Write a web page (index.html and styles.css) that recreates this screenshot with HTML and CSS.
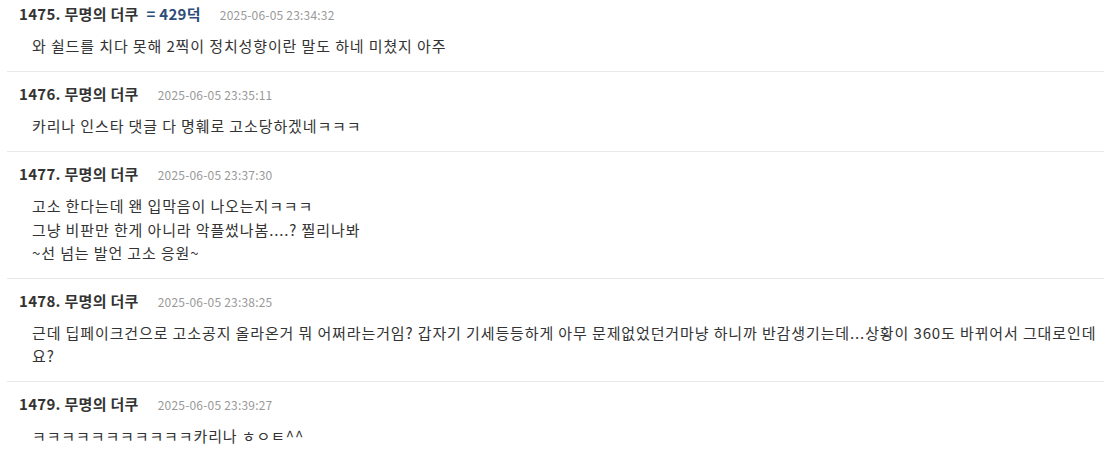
FILE: index.html
```html
<!DOCTYPE html>
<html>
<head>
	<meta charset="utf-8">
	<link rel="stylesheet" href="styles.css">
	<title>댓글</title>
</head>
<body>
	<div id="commentList">
		<div class="comment">
			<div class="commentHeader">
				<span class="commentName">1475. 무명의 더쿠 <span class="commentPoint">= 429덕</span></span>
				<span class="commentDate">2025-06-05 23:34:32</span>
			</div>
			<div class="commentBody">와 쉴드를 치다 못해 2찍이 정치성향이란 말도 하네 미쳤지 아주</div>
		</div>
		<div class="comment">
			<div class="commentHeader">
				<span class="commentName">1476. 무명의 더쿠</span>
				<span class="commentDate">2025-06-05 23:35:11</span>
			</div>
			<div class="commentBody">카리나 인스타 댓글 다 명훼로 고소당하겠네ㅋㅋㅋ</div>
		</div>
		<div class="comment">
			<div class="commentHeader">
				<span class="commentName">1477. 무명의 더쿠</span>
				<span class="commentDate">2025-06-05 23:37:30</span>
			</div>
			<div class="commentBody">고소 한다는데 왠 입막음이 나오는지ㅋㅋㅋ<br>그냥 비판만 한게 아니라 악플썼나봄....? 찔리나봐<br>~선 넘는 발언 고소 응원~</div>
		</div>
		<div class="comment">
			<div class="commentHeader">
				<span class="commentName">1478. 무명의 더쿠</span>
				<span class="commentDate">2025-06-05 23:38:25</span>
			</div>
			<div class="commentBody">근데 딥페이크건으로 고소공지 올라온거 뭐 어쩌라는거임? 갑자기 기세등등하게 아무 문제없었던거마냥 하니까 반감생기는데...상황이 360도 바뀌어서 그대로인데요?</div>
		</div>
		<div class="comment">
			<div class="commentHeader">
				<span class="commentName">1479. 무명의 더쿠</span>
				<span class="commentDate">2025-06-05 23:39:27</span>
			</div>
			<div class="commentBody">ㅋㅋㅋㅋㅋㅋㅋㅋㅋㅋㅋ카리나 ㅎㅇㅌ^^</div>
		</div>
	</div>
</body>
</html>
```
FILE: styles.css
```css
body{
	margin: 0;
	background-color: #ffffff;
	font-family: 'Noto Sans CJK KR', 'Noto Sans', sans-serif;
	color: #333333;
	overflow: hidden;
}
#commentList{
	margin-top: -8px;
	margin-left: 7px;
}
.comment{
	padding: 12px 6px 14px 12px;
	border-bottom: 1px solid #e8e8e8;
}
.commentHeader{
	display: flex;
	align-items: baseline;
	height: 20px;
	line-height: 20px;
}
.commentName{
	font-size: 15px;
	font-weight: bold;
	letter-spacing: 0.3px;
	color: #333333;
}
.commentPoint{
	color: #2e4d78;
	margin-left: 4px;
}
.commentDate{
	font-size: 12px;
	letter-spacing: 0.2px;
	color: #999999;
	margin-left: 19px;
}
.commentBody{
	margin-top: 10px;
	padding-left: 13px;
	font-size: 15px;
	letter-spacing: 0.88px;
	line-height: 23.2px;
	color: #333333;
}
```
